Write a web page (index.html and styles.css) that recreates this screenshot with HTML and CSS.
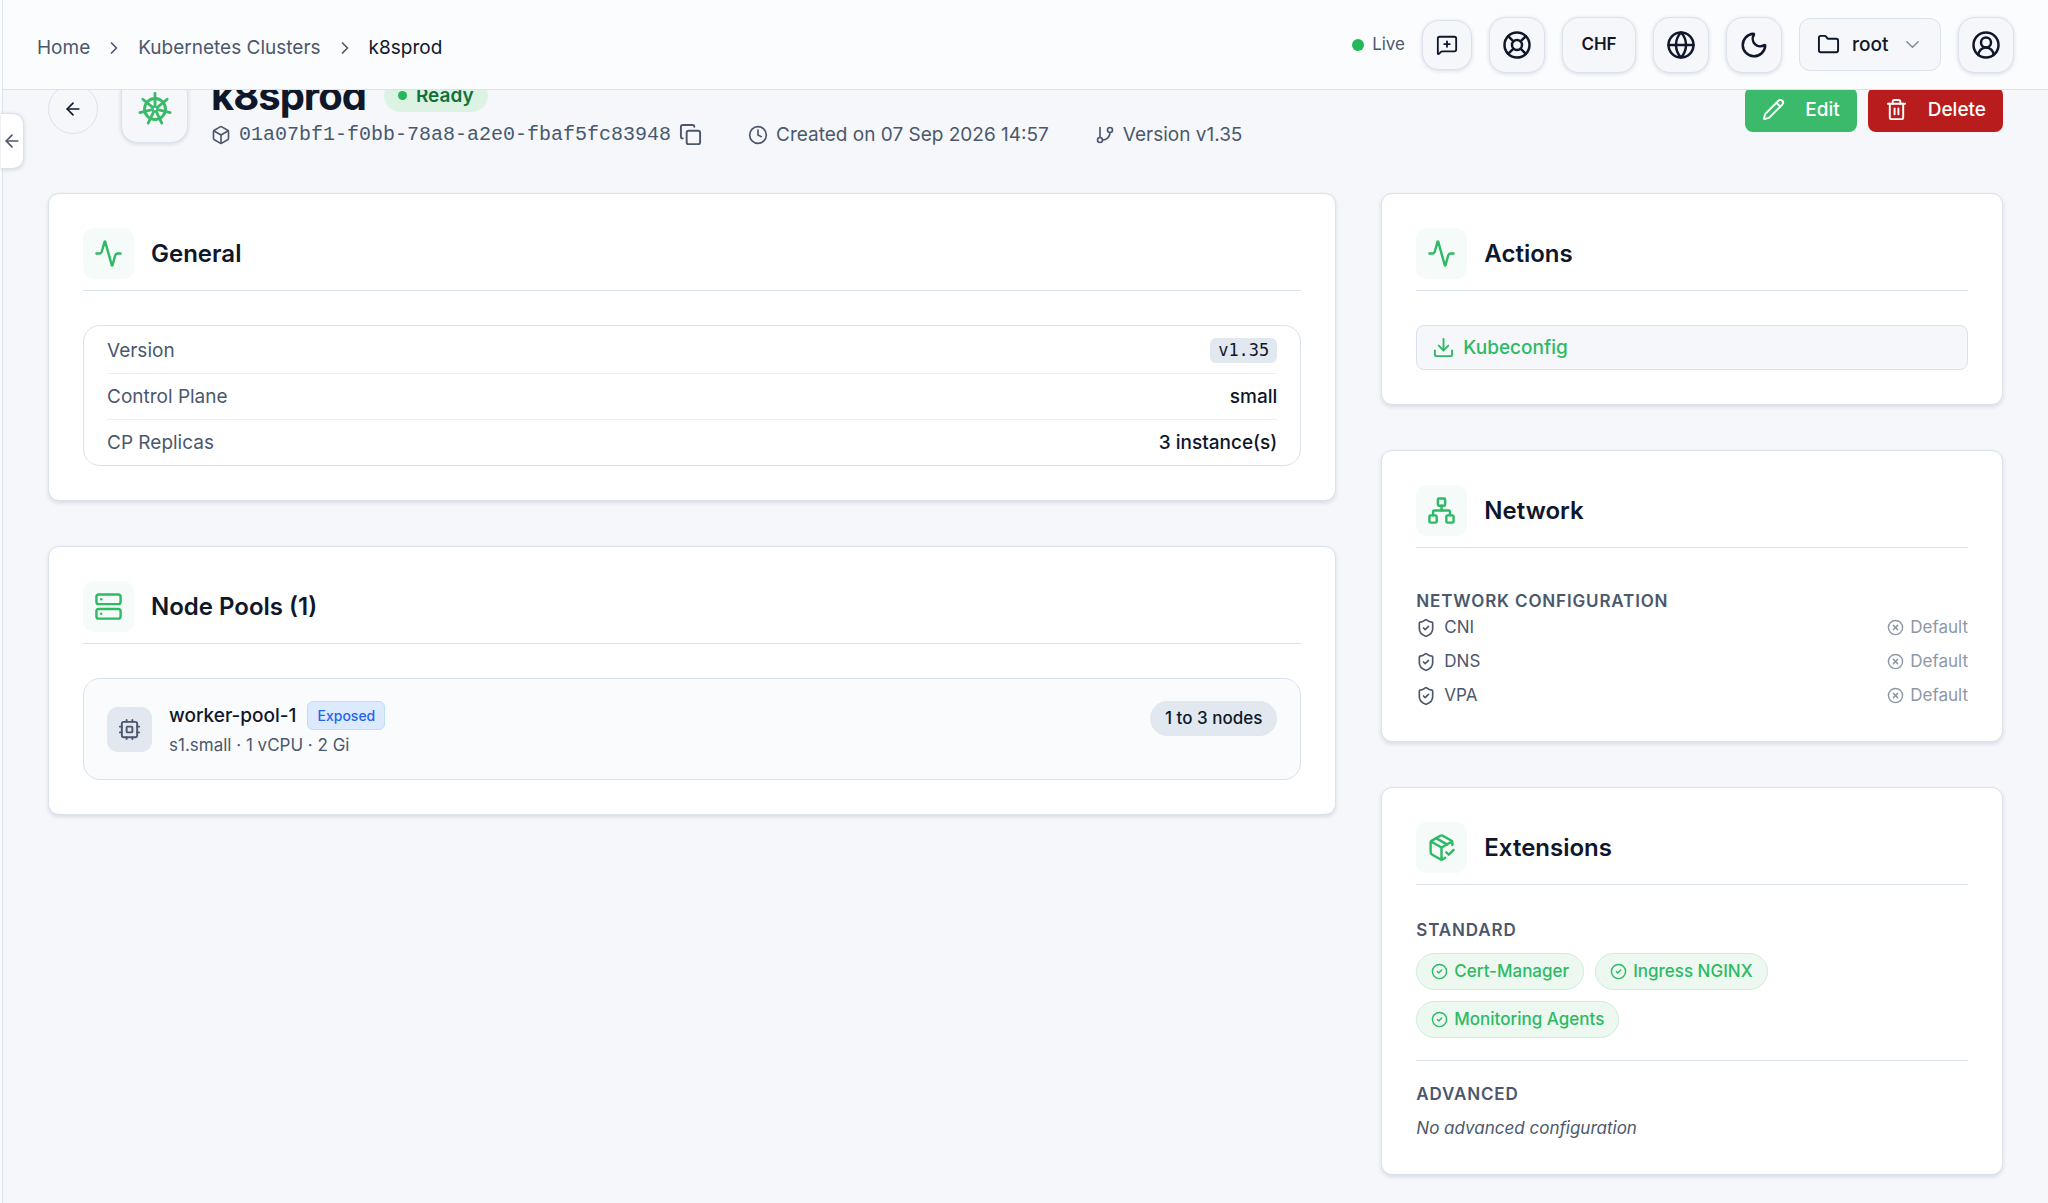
FILE: index.html
```html
<!DOCTYPE html>
<html lang="en">
  <head>
    <meta charset="utf-8">
    <meta name="viewport" content="width=device-width, initial-scale=1">
    <title>k8sprod - Kubernetes Clusters</title>
    <link rel="stylesheet" href="styles.css">
  </head>
  <body>
    <!-- icons used more than once -->
    <svg class="sprite" aria-hidden="true">
      <symbol id="arrow-left" viewBox="0 0 24 24"><path d="m12 19-7-7 7-7"/><path d="M19 12H5"/></symbol>
      <symbol id="chevron-right" viewBox="0 0 24 24"><path d="m9 18 6-6-6-6"/></symbol>
      <symbol id="activity" viewBox="0 0 24 24"><path d="M22 12h-2.48a2 2 0 0 0-1.93 1.46l-2.35 8.36a.25.25 0 0 1-.48 0L9.24 2.18a.25.25 0 0 0-.48 0l-2.35 8.36A2 2 0 0 1 4.49 12H2"/></symbol>
      <symbol id="shield-check" viewBox="0 0 24 24"><path d="M20 13c0 5-3.5 7.5-7.66 8.95a1 1 0 0 1-.67-.01C7.5 20.5 4 18 4 13V6a1 1 0 0 1 1-1c2 0 4.500-1.200 6.240-2.720a1.170 1.170 0 0 1 1.520 0C14.510 3.810 17 5 19 5a1 1 0 0 1 1 1z"/><path d="m9 12 2 2 4-4"/></symbol>
      <symbol id="circle-x" viewBox="0 0 24 24"><circle cx="12" cy="12" r="10"/><path d="m15 9-6 6"/><path d="m9 9 6 6"/></symbol>
      <symbol id="circle-check" viewBox="0 0 24 24"><circle cx="12" cy="12" r="10"/><path d="m9 12 2 2 4-4"/></symbol>
    </svg>

    <div class="layout">
      <aside class="sidebar">
        <button class="sidebar-toggle" aria-label="Toggle sidebar"><svg class="icon"><use href="#arrow-left"/></svg></button>
      </aside>

      <div class="page">
        <header class="topbar">
          <nav class="breadcrumb" aria-label="Breadcrumb">
            <a href="#">Home</a>
            <svg class="icon"><use href="#chevron-right"/></svg>
            <a href="#">Kubernetes Clusters</a>
            <svg class="icon"><use href="#chevron-right"/></svg>
            <span class="current">k8sprod</span>
          </nav>
          <div class="tools">
            <span class="live"><span class="dot"></span>Live</span>
            <button class="tool tool-small" aria-label="Feedback">
              <svg class="icon" viewBox="0 0 24 24"><path d="M22 17a2 2 0 0 1-2 2H6.828a2 2 0 0 0-1.414.586l-2.202 2.202A.71.71 0 0 1 2 21.286V5a2 2 0 0 1 2-2h16a2 2 0 0 1 2 2z"/><path d="M12 8v6"/><path d="M9 11h6"/></svg>
            </button>
            <button class="tool" aria-label="Support">
              <svg class="icon" viewBox="0 0 24 24"><circle cx="12" cy="12" r="10"/><path d="m4.930 4.930 4.240 4.240"/><path d="m14.830 9.170 4.240-4.240"/><path d="m14.830 14.830 4.240 4.240"/><path d="m9.170 14.830-4.240 4.240"/><circle cx="12" cy="12" r="4"/></svg>
            </button>
            <button class="tool tool-text">CHF</button>
            <button class="tool" aria-label="Language">
              <svg class="icon" viewBox="0 0 24 24"><circle cx="12" cy="12" r="10"/><path d="M12 2a14.500 14.500 0 0 0 0 20 14.500 14.500 0 0 0 0-20"/><path d="M2 12h20"/></svg>
            </button>
            <button class="tool" aria-label="Dark mode">
              <svg class="icon" viewBox="0 0 24 24"><path d="M20.985 12.486a9 9 0 1 1-9.473-9.472c.405-.022.617.46.402.803a6 6 0 0 0 8.268 8.268c.344-.215.825-.004.803.401"/></svg>
            </button>
            <label class="project">
              <svg class="icon" viewBox="0 0 24 24"><path d="M20 20a2 2 0 0 0 2-2V8a2 2 0 0 0-2-2h-7.900a2 2 0 0 1-1.690-.9L9.600 3.900A2 2 0 0 0 7.930 3H4a2 2 0 0 0-2 2v13a2 2 0 0 0 2 2Z"/></svg>
              <select aria-label="Project">
                <option>root</option>
              </select>
              <svg class="icon chevron" viewBox="0 0 24 24"><path d="m4 8 8 8 8-8"/></svg>
            </label>
            <button class="tool" aria-label="Account">
              <svg class="icon" viewBox="0 0 24 24"><path d="M18 20a6 6 0 0 0-12 0"/><circle cx="12" cy="10" r="4"/><circle cx="12" cy="12" r="10"/></svg>
            </button>
          </div>
        </header>

        <main class="content">
          <div class="page-head">
            <button class="back" aria-label="Back"><svg class="icon"><use href="#arrow-left"/></svg></button>
            <div class="cluster-icon">
              <svg class="icon" viewBox="0 0 24 24"><circle cx="12" cy="12" r="7.400"/><circle class="hub" cx="12" cy="12" r="1.600"/><path class="spokes" d="M12 10V1M13.600 10.800l7-5.700M14 12.500l8.700 2M12.900 13.800l3.900 8.100M11.100 13.800l-3.900 8.100M10 12.500l-8.700 2M10.400 10.800l-7-5.700"/></svg>
            </div>
            <div class="heading">
              <div class="title-row">
                <h1>k8sprod</h1>
                <span class="status"><span class="dot"></span>Ready</span>
              </div>
              <div class="meta">
                <div class="meta-item">
                  <svg class="icon" viewBox="0 0 24 24"><path d="M21 8a2 2 0 0 0-1-1.730l-7-4a2 2 0 0 0-2 0l-7 4A2 2 0 0 0 3 8v8a2 2 0 0 0 1 1.730l7 4a2 2 0 0 0 2 0l7-4A2 2 0 0 0 21 16Z"/><path d="m3.300 7 8.700 5 8.700-5"/><path d="M12 22V12"/></svg>
                  <span class="uuid">01a07bf1-f0bb-78a8-a2e0-fbaf5fc83948</span>
                  <button class="copy" aria-label="Copy ID">
                    <svg class="icon" viewBox="0 0 24 24"><rect width="14" height="14" x="8" y="8" rx="2" ry="2"/><path d="M4 16c-1.100 0-2-.9-2-2V4c0-1.100.9-2 2-2h10c1.100 0 2 .9 2 2"/></svg>
                  </button>
                </div>
                <div class="meta-item">
                  <svg class="icon" viewBox="0 0 24 24"><circle cx="12" cy="12" r="10"/><path d="M12 6v6l4 2"/></svg>
                  <span>Created on 07 Sep 2026 14:57</span>
                </div>
                <div class="meta-item">
                  <svg class="icon" viewBox="0 0 24 24"><path d="M6 3v12"/><circle cx="18" cy="6" r="3"/><circle cx="6" cy="18" r="3"/><path d="M18 9a9 9 0 0 1-9 9"/></svg>
                  <span>Version v1.35</span>
                </div>
              </div>
            </div>
            <div class="head-actions">
              <button class="btn btn-edit">
                <svg class="icon" viewBox="0 0 24 24"><path d="M21.174 6.812a1 1 0 0 0-3.986-3.987L3.842 16.174a2 2 0 0 0-.5.830l-1.321 4.352a.5.5 0 0 0 .623.622l4.353-1.320a2 2 0 0 0 .830-.497z"/><path d="m15 5 4 4"/></svg>
                Edit
              </button>
              <button class="btn btn-delete">
                <svg class="icon" viewBox="0 0 24 24"><path d="M3 6h18"/><path d="M19 6v14c0 1-1 2-2 2H7c-1 0-2-1-2-2V6"/><path d="M8 6V4c0-1 1-2 2-2h4c1 0 2 1 2 2v2"/><path d="M10 11v6"/><path d="M14 11v6"/></svg>
                Delete
              </button>
            </div>
          </div>

          <div class="columns">
            <div class="col col-main">
              <section class="card">
                <div class="card-head">
                  <span class="card-icon"><svg class="icon"><use href="#activity"/></svg></span>
                  <h2>General</h2>
                </div>
                <dl class="details">
                  <div class="row"><dt>Version</dt><dd><code>v1.35</code></dd></div>
                  <div class="row"><dt>Control Plane</dt><dd>small</dd></div>
                  <div class="row"><dt>CP Replicas</dt><dd>3 instance(s)</dd></div>
                </dl>
              </section>

              <section class="card">
                <div class="card-head">
                  <span class="card-icon">
                    <svg class="icon" viewBox="0 0 24 24"><rect width="20" height="8" x="2" y="2" rx="2" ry="2"/><rect width="20" height="8" x="2" y="14" rx="2" ry="2"/><path d="M6 6h.01"/><path d="M6 18h.01"/></svg>
                  </span>
                  <h2>Node Pools (1)</h2>
                </div>
                <div class="pool">
                  <span class="pool-icon">
                    <svg class="icon" viewBox="0 0 24 24"><rect x="4" y="4" width="16" height="16" rx="2"/><rect x="9" y="9" width="6" height="6" rx="1"/><path d="M15 2v2M15 20v2M2 15h2M2 9h2M20 15h2M20 9h2M9 2v2M9 20v2"/></svg>
                  </span>
                  <div class="pool-info">
                    <div class="pool-name">worker-pool-1 <span class="tag">Exposed</span></div>
                    <div class="pool-spec">s1.small · 1 vCPU · 2 Gi</div>
                  </div>
                  <span class="pool-size">1 to 3 nodes</span>
                </div>
              </section>
            </div>

            <div class="col">
              <section class="card">
                <div class="card-head">
                  <span class="card-icon"><svg class="icon"><use href="#activity"/></svg></span>
                  <h2>Actions</h2>
                </div>
                <button class="btn-outline">
                  <svg class="icon" viewBox="0 0 24 24"><path d="M21 15v4a2 2 0 0 1-2 2H5a2 2 0 0 1-2-2v-4"/><path d="m7 10 5 5 5-5"/><path d="M12 15V3"/></svg>
                  Kubeconfig
                </button>
              </section>

              <section class="card">
                <div class="card-head">
                  <span class="card-icon">
                    <svg class="icon" viewBox="0 0 24 24"><rect x="16" y="16" width="6" height="6" rx="1"/><rect x="2" y="16" width="6" height="6" rx="1"/><rect x="9" y="2" width="6" height="6" rx="1"/><path d="M5 16v-3a1 1 0 0 1 1-1h12a1 1 0 0 1 1 1v3"/><path d="M12 12V8"/></svg>
                  </span>
                  <h2>Network</h2>
                </div>
                <div class="network">
                  <h3>Network Configuration</h3>
                  <ul class="network-list">
                    <li><span class="name"><svg class="icon"><use href="#shield-check"/></svg>CNI</span><span class="value"><svg class="icon"><use href="#circle-x"/></svg>Default</span></li>
                    <li><span class="name"><svg class="icon"><use href="#shield-check"/></svg>DNS</span><span class="value"><svg class="icon"><use href="#circle-x"/></svg>Default</span></li>
                    <li><span class="name"><svg class="icon"><use href="#shield-check"/></svg>VPA</span><span class="value"><svg class="icon"><use href="#circle-x"/></svg>Default</span></li>
                  </ul>
                </div>
              </section>

              <section class="card">
                <div class="card-head">
                  <span class="card-icon">
                    <svg class="icon" viewBox="0 0 24 24"><path d="m16 16 2 2 4-4"/><path d="M21 10V8a2 2 0 0 0-1-1.730l-7-4a2 2 0 0 0-2 0l-7 4A2 2 0 0 0 3 8v8a2 2 0 0 0 1 1.730l7 4a2 2 0 0 0 2 0l2-1.140"/><path d="m7.500 4.270 9 5.150"/><path d="M3.290 7 12 12l8.710-5"/><path d="M12 22V12"/></svg>
                  </span>
                  <h2>Extensions</h2>
                </div>
                <div class="ext-group">
                  <h3>Standard</h3>
                  <div class="chips">
                    <span class="chip"><svg class="icon"><use href="#circle-check"/></svg>Cert-Manager</span>
                    <span class="chip"><svg class="icon"><use href="#circle-check"/></svg>Ingress NGINX</span>
                    <span class="chip"><svg class="icon"><use href="#circle-check"/></svg>Monitoring Agents</span>
                  </div>
                </div>
                <div class="ext-group">
                  <h3>Advanced</h3>
                  <p class="empty">No advanced configuration</p>
                </div>
              </section>
            </div>
          </div>
        </main>
      </div>
    </div>
  </body>
</html>
```

FILE: styles.css
```css
:root {
  --bg: #f5f7fb;
  --surface: #fbfcfe;
  --border: #d9e2ed;
  --text: #0f172a;
  --muted: #4b586c;
  --green: #2dba64;
  --shadow: 0 1px 4px rgba(15, 23, 42, 0.14);
}
* { box-sizing: border-box; }
body {
  margin: 0;
  background: var(--bg);
  color: var(--text);
  font-family: Inter, "Liberation Sans", sans-serif;
  font-size: 19px;
  line-height: 23px;
}
h1, h2, h3, p, dl, dd, ul { margin: 0; padding: 0; }
ul { list-style: none; }
a { color: inherit; text-decoration: none; }
button, select {
  font: inherit;
  color: inherit;
  cursor: pointer;
}
.sprite { display: none; }
.icon {
  width: 20px;
  height: 20px;
  flex: none;
  fill: none;
  stroke: currentColor;
  stroke-width: 2;
  stroke-linecap: round;
  stroke-linejoin: round;
}
.dot {
  width: 9px;
  height: 9px;
  border-radius: 50%;
  background: #22b95a;
}

.layout { display: flex; min-height: 100vh; }
.sidebar {
  position: relative;
  z-index: 3;
  flex: none;
  width: 3px;
  background: var(--surface);
  border-right: 1px solid var(--border);
}
.sidebar-toggle {
  position: absolute;
  top: 113px;
  left: 1px;
  display: flex;
  align-items: center;
  justify-content: center;
  width: 23px;
  height: 56px;
  padding: 0;
  border: 1px solid var(--border);
  border-left: 0;
  border-radius: 0 11px 11px 0;
  background: #fff;
  color: var(--muted);
  box-shadow: var(--shadow);
}
.page { flex: 1; min-width: 0; }

/* top bar */
.topbar {
  position: sticky;
  top: 0;
  z-index: 2;
  display: flex;
  align-items: center;
  justify-content: space-between;
  height: 90px;
  padding: 0 34px;
  background: var(--surface);
  border-bottom: 1px solid var(--border);
}
.breadcrumb {
  display: flex;
  align-items: center;
  gap: 14px;
  padding-top: 6px;
  color: var(--muted);
}
.breadcrumb .current { color: var(--text); }
.tools {
  display: flex;
  align-items: center;
  gap: 17px;
}
.live {
  display: flex;
  align-items: center;
  gap: 8px;
  font-size: 17px;
  color: var(--muted);
}
.live .dot { width: 12px; height: 12px; }
.tool {
  display: flex;
  align-items: center;
  justify-content: center;
  width: 56px;
  height: 56px;
  padding: 0;
  border: 1px solid var(--border);
  border-radius: 17px;
  background: var(--bg);
  box-shadow: var(--shadow);
}
.tool .icon { width: 30px; height: 30px; }
.tool-small { width: 50px; height: 50px; }
.tool-small .icon { width: 22px; height: 22px; }
.tool-text {
  width: 74px;
  font-size: 17px;
  font-weight: 600;
}
.project {
  display: flex;
  align-items: center;
  height: 53px;
  padding: 0 19px 0 17px;
  border: 1px solid var(--border);
  border-radius: 11px;
  background: var(--bg);
}
.project .icon { width: 23px; height: 23px; }
.project select {
  margin: 0 15px 0 12px;
  padding: 0;
  border: 0;
  background: none;
  appearance: none;
  font-weight: 500;
}
.project .chevron { width: 17px; height: 17px; color: #7d8798; }

/* page heading, partly scrolled under the top bar */
.content { padding: 0 45px 28px; margin-top: -18px; }
.page-head {
  display: flex;
  align-items: center;
  margin-bottom: 47px;
}
.back {
  display: flex;
  align-items: center;
  justify-content: center;
  width: 50px;
  height: 50px;
  margin-right: 23px;
  padding: 0;
  border: 1px solid var(--border);
  border-radius: 50%;
  background: var(--bg);
}
.cluster-icon {
  display: flex;
  align-items: center;
  justify-content: center;
  width: 67px;
  height: 67px;
  margin-right: 23px;
  border: 1px solid var(--border);
  border-radius: 17px;
  background: var(--bg);
  color: #3aba6a;
  box-shadow: var(--shadow);
}
.cluster-icon .icon { width: 34px; height: 34px; }
.cluster-icon .hub { stroke-width: 1; }
.title-row {
  display: flex;
  align-items: center;
  gap: 18px;
  height: 47px;
}
h1 {
  font-size: 40px;
  line-height: 47px;
  font-weight: 700;
  letter-spacing: -1px;
}
.status {
  display: flex;
  align-items: center;
  gap: 9px;
  height: 33px;
  padding: 0 14px;
  border-radius: 17px;
  background: #dcf3e4;
  color: #14703a;
  font-weight: 600;
}
.meta {
  display: flex;
  align-items: center;
  gap: 46px;
  margin-top: 4px;
  color: var(--muted);
}
.meta-item {
  display: flex;
  align-items: center;
  gap: 8px;
}
.uuid {
  font-family: "Liberation Mono", monospace;
  font-size: 20px;
}
.copy {
  display: flex;
  padding: 0;
  border: 0;
  background: none;
}
.copy .icon { width: 23px; height: 23px; }
.head-actions {
  display: flex;
  gap: 11px;
  margin-left: auto;
}
.btn {
  display: flex;
  align-items: center;
  gap: 20px;
  height: 45px;
  padding: 0 17px;
  border: 0;
  border-radius: 8px;
  color: #fff;
  font-weight: 500;
}
.btn .icon { width: 23px; height: 23px; }
.btn-edit { background: #3aba6a; }
.btn-delete { background: #b91c1c; }

/* cards */
.columns {
  display: grid;
  grid-template-columns: repeat(3, 1fr);
  gap: 45px;
  align-items: start;
}
.col {
  display: flex;
  flex-direction: column;
  gap: 45px;
  min-width: 0;
}
.col-main { grid-column: span 2; }
.card {
  padding: 34px;
  border: 1px solid var(--border);
  border-radius: 11px;
  background: #fff;
  box-shadow: 0 2px 4px rgba(15, 23, 42, 0.12);
}
.card-head {
  display: flex;
  align-items: center;
  gap: 17px;
  margin-bottom: 34px;
  padding-bottom: 11px;
  border-bottom: 1px solid var(--border);
}
.card-icon {
  display: flex;
  align-items: center;
  justify-content: center;
  width: 51px;
  height: 51px;
  border-radius: 11px;
  background: #f5fbf8;
  color: var(--green);
}
.card-icon .icon { width: 29px; height: 29px; }
h2 {
  padding-top: 1px;
  font-size: 24px;
  line-height: 34px;
  font-weight: 600;
}
h3 {
  color: var(--muted);
  font-size: 17px;
  line-height: 23px;
  font-weight: 600;
  letter-spacing: 0.05em;
  text-transform: uppercase;
}

.details {
  padding: 1px 23px 0;
  border: 1px solid var(--border);
  border-radius: 17px;
}
.row {
  display: flex;
  align-items: center;
  justify-content: space-between;
  height: 46px;
}
.row + .row { border-top: 1px solid #eaeff5; }
.row dt { color: var(--muted); }
.row dd { font-weight: 500; }
code {
  display: block;
  padding: 1px 8px;
  border-radius: 6px;
  background: #e2e8f0;
  font-family: "DejaVu Sans Mono", monospace;
  font-size: 17px;
  font-weight: 400;
}

.pool {
  display: flex;
  align-items: center;
  gap: 17px;
  padding: 22px 23px;
  border: 1px solid var(--border);
  border-radius: 17px;
  background: #fafbfd;
}
.pool-icon {
  display: flex;
  align-items: center;
  justify-content: center;
  width: 45px;
  height: 45px;
  border-radius: 11px;
  background: #e2e8f0;
  color: var(--muted);
}
.pool-icon .icon { width: 23px; height: 23px; }
.pool-name {
  display: flex;
  align-items: center;
  gap: 11px;
  font-weight: 500;
}
.tag {
  padding: 2px 9px;
  border: 1px solid #bfdbfe;
  border-radius: 6px;
  background: #dbeafe;
  color: #2563eb;
  font-size: 14px;
}
.pool-spec {
  margin-top: 4px;
  color: var(--muted);
  font-size: 17px;
}
.pool-size {
  align-self: flex-start;
  margin-left: auto;
  padding: 6px 15px;
  border-radius: 18px;
  background: #e2e8f0;
  font-size: 17px;
  font-weight: 500;
}

.btn-outline {
  display: flex;
  align-items: center;
  gap: 8px;
  width: 100%;
  height: 45px;
  padding: 0 15px;
  border: 1px solid var(--border);
  border-radius: 8px;
  background: var(--bg);
  color: var(--green);
  font-weight: 500;
}
.btn-outline .icon { width: 23px; height: 23px; }

.network { padding-top: 8px; }
.network-list {
  display: flex;
  flex-direction: column;
  gap: 11px;
  margin-top: 3px;
  font-size: 17px;
}
.network-list li {
  display: flex;
  justify-content: space-between;
  color: var(--muted);
}
.name, .value {
  display: flex;
  align-items: center;
  gap: 8px;
}
.value {
  gap: 6px;
  color: #8e97a6;
}
.value .icon { width: 17px; height: 17px; }

.ext-group + .ext-group {
  margin-top: 22px;
  padding-top: 22px;
  border-top: 1px solid var(--border);
}
.chips {
  display: flex;
  flex-wrap: wrap;
  gap: 11px;
  margin-top: 11px;
}
.chip {
  display: flex;
  align-items: center;
  gap: 6px;
  padding: 6px 14px;
  border: 1px solid #cdeed9;
  border-radius: 19px;
  background: #ecf8f0;
  color: var(--green);
  font-size: 17px;
  font-weight: 500;
}
.chip .icon { width: 17px; height: 17px; }
.empty {
  margin-top: 11px;
  color: var(--muted);
  font-size: 17px;
  font-style: italic;
}
```
